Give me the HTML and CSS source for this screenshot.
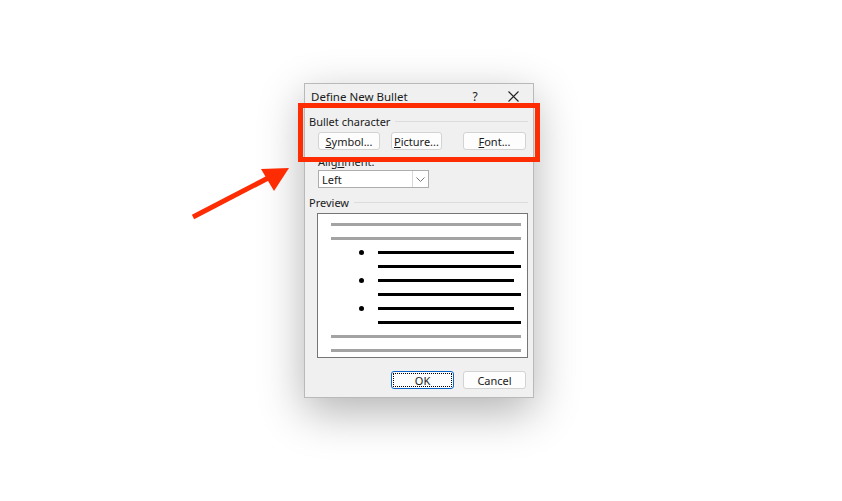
FILE: index.html
```html
<!DOCTYPE html>
<html lang="en">
<head>
    <meta charset="UTF-8">
    <meta name="viewport" content="width=device-width, initial-scale=1.0">
    <title>Define New Bullet</title>
    <link rel="stylesheet" href="styles.css">
</head>
<body>
    <div class="stage">
        <div class="dialog">
            <div class="title-bar">
                <span class="title">Define New Bullet</span>
                <span class="help">?</span>
                <span class="close">
                    <svg width="11" height="11" viewBox="0 0 11 11">
                        <path d="M0.5 0.5 L10.5 10.5 M10.5 0.5 L0.5 10.5" stroke="#222" stroke-width="1.1" fill="none"/>
                    </svg>
                </span>
            </div>

            <div class="group-label">
                <span>Bullet character</span>
                <span class="rule"></span>
            </div>
            <div class="char-buttons">
                <button class="btn btn-symbol"><u>S</u>ymbol...</button>
                <button class="btn btn-picture"><u>P</u>icture...</button>
                <button class="btn btn-font"><u>F</u>ont...</button>
            </div>

            <div class="field-label">Alig<u>n</u>ment:</div>
            <div class="select">
                <span class="select-value">Left</span>
                <span class="select-arrow">
                    <svg width="9" height="5" viewBox="0 0 9 5">
                        <path d="M0.5 0.5 L4.5 4.5 L8.5 0.5" stroke="#777" stroke-width="1" fill="none"/>
                    </svg>
                </span>
            </div>

            <div class="group-label preview-label">
                <span>Preview</span>
                <span class="rule"></span>
            </div>
            <div class="preview">
                <div class="row"><span class="line gray"></span></div>
                <div class="row"><span class="line gray"></span></div>
                <div class="row item"><span class="dot"></span><span class="line black short"></span></div>
                <div class="row item"><span class="line black long"></span></div>
                <div class="row item"><span class="dot"></span><span class="line black short"></span></div>
                <div class="row item"><span class="line black long"></span></div>
                <div class="row item"><span class="dot"></span><span class="line black short"></span></div>
                <div class="row item"><span class="line black long"></span></div>
                <div class="row"><span class="line gray"></span></div>
                <div class="row"><span class="line gray"></span></div>
            </div>

            <div class="footer">
                <button class="btn btn-ok"><span class="focus">OK</span></button>
                <button class="btn btn-cancel">Cancel</button>
            </div>
        </div>

        <!-- callout drawn over the screenshot -->
        <div class="highlight"></div>
        <svg class="arrow" width="842" height="501" viewBox="0 0 842 501">
            <line x1="193" y1="217" x2="272" y2="176" stroke="#fe2c02" stroke-width="5"/>
            <polygon points="289,168 261,169 274,191" fill="#fe2c02"/>
        </svg>
    </div>
</body>
</html>
```

FILE: styles.css
```css
body {
    margin: 0;
    padding: 0;
    background: #fff;
    font-family: "Noto Sans", "Open Sans", Arial, sans-serif;
    font-size: 11px;
    color: #1a1a1a;
}
.stage {
    position: relative;
    width: 842px;
    height: 501px;
    overflow: hidden;
    box-sizing: border-box;
    padding: 83px 0 0 304px;
}
.dialog {
    width: 230px;
    height: 315px;
    box-sizing: border-box;
    background: #f0f0f0;
    border: 1px solid #b9b9b9;
    box-shadow: 0 14px 42px rgba(0, 0, 0, 0.3);
    display: flex;
    flex-direction: column;
}
.title-bar {
    height: 25px;
    display: flex;
    align-items: center;
    padding-left: 6px;
    font-size: 11.5px;
}
.title {
    flex: 1;
}
.help {
    width: 12px;
    text-align: center;
    margin-right: 27px;
    font-size: 12px;
}
.close {
    display: flex;
    margin-right: 14px;
}
.group-label {
    display: flex;
    align-items: center;
    gap: 5px;
    margin: 5px 5px 0 4px;
    height: 15px;
}
.rule {
    flex: 1;
    height: 1px;
    background: #dcdcdc;
}
.char-buttons {
    display: flex;
    margin: 3px 0 0 13px;
}
.btn {
    height: 18px;
    box-sizing: border-box;
    padding: 0;
    background: #fdfdfd;
    border: 1px solid #d3d3d3;
    border-radius: 3px;
    font-family: inherit;
    font-size: 11px;
    color: #1a1a1a;
}
.btn-symbol {
    width: 62px;
}
.btn-picture {
    width: 51px;
    margin-left: 11px;
}
.btn-font {
    width: 63px;
    margin-left: 21px;
}
.field-label {
    margin: 5px 0 0 13px;
    height: 14px;
    line-height: 14px;
}
.select {
    width: 111px;
    height: 18px;
    margin: 1px 0 0 13px;
    box-sizing: border-box;
    background: #fff;
    border: 1px solid #adadad;
    display: flex;
    align-items: center;
}
.select-value {
    flex: 1;
    padding-left: 3px;
}
.select-arrow {
    width: 15px;
    height: 16px;
    border-left: 1px solid #d7d7d7;
    display: flex;
    align-items: center;
    justify-content: center;
}
.preview-label {
    margin-top: 7px;
}
.preview {
    width: 211px;
    height: 145px;
    margin: 3px 0 0 12px;
    box-sizing: border-box;
    background: #fff;
    border: 1px solid #767676;
    padding-top: 3px;
}
.row {
    height: 14px;
    display: flex;
    align-items: center;
    padding: 0 6px 0 13px;
}
.row.item {
    padding-left: 41px;
}
.line {
    height: 3px;
}
.gray {
    flex: 1;
    background: #a3a3a3;
}
.black {
    background: #000;
}
.short {
    width: 136px;
}
.long {
    width: 143px;
    margin-left: 19px;
}
.dot {
    width: 5px;
    height: 5px;
    border-radius: 50%;
    background: #000;
    margin-right: 14px;
}
.footer {
    display: flex;
    margin: 13px 0 0 86px;
}
.btn-ok {
    width: 63px;
    border: 1px solid #0a64c8;
    padding: 1px;
}
.focus {
    display: block;
    height: 14px;
    line-height: 13px;
    box-sizing: border-box;
    border: 1px dotted #000;
}
.btn-cancel {
    width: 63px;
    margin-left: 9px;
}
.highlight {
    position: absolute;
    left: 298px;
    top: 103px;
    width: 242px;
    height: 59px;
    box-sizing: border-box;
    border: 5px solid #fe2c02;
}
.arrow {
    position: absolute;
    left: 0;
    top: 0;
}
```
